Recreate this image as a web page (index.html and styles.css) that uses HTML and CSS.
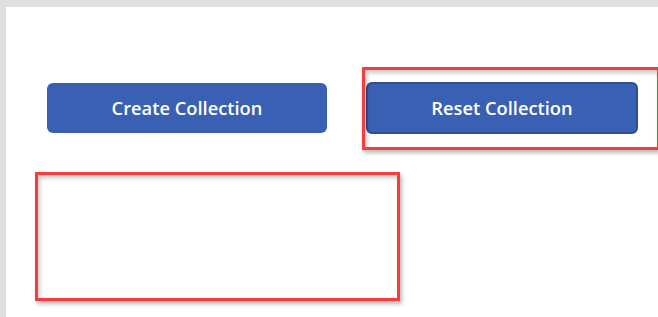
FILE: index.html
```html
<!DOCTYPE html>
<html>
<head>
<meta charset="utf-8">
<link rel="stylesheet" href="styles.css">
</head>
<body>
<div class="canvas">
  <div class="button-row">
    <button class="btn btn-create">Create Collection</button>
    <button class="btn btn-reset">Reset Collection</button>
  </div>
  <div class="highlight highlight-reset"></div>
  <div class="highlight highlight-gallery"></div>
</div>
</body>
</html>
```
FILE: styles.css
```css
html, body {
  margin: 0;
  padding: 0;
  width: 658px;
  height: 317px;
  overflow: hidden;
  background: #dfdfdf;
}

.canvas {
  position: relative;
  margin: 7px 0 0 6px;
  height: 310px;
  background: #ffffff;
  box-sizing: border-box;
  padding: 75px 0 0 41px;
}

.button-row {
  display: flex;
  align-items: center;
  gap: 39px;
}

.btn {
  font-family: "Open Sans", "Liberation Sans", sans-serif;
  font-weight: 600;
  font-size: 18.3px;
  color: #ffffff;
  background: #3a60b3;
  border: none;
  border-radius: 6px;
  padding: 0 0 1px 0;
  margin: 0;
  cursor: pointer;
}

.btn-create {
  width: 280px;
  height: 50px;
}

.btn-reset {
  width: 272px;
  height: 52px;
  border: 2px solid #2e4f98;
  box-shadow: inset 0 0 0 1px #3a60b3;
}

.highlight {
  position: absolute;
  box-sizing: border-box;
  border: 3px solid #f23e3e;
  box-shadow: 2px 3px 4px rgba(0, 0, 0, 0.28), inset 2px 3px 4px rgba(0, 0, 0, 0.22);
}

.highlight-reset {
  left: 356px;
  top: 60px;
  width: 298px;
  height: 83px;
}

.highlight-gallery {
  left: 29px;
  top: 165px;
  width: 365px;
  height: 129px;
}
```
